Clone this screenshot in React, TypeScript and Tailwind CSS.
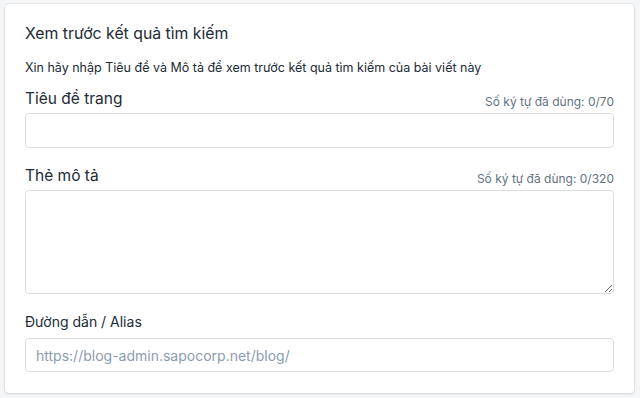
import React from "react";

export default function App() {
  return (
    <div
      className="min-h-[398px] w-[640px] bg-[#f4f6f8] pt-[4px] pl-[5px] text-[#212b36]"
      style={{ fontFamily: 'Inter, "Noto Sans", sans-serif' }}
    >
      <div className="w-[629px] rounded-[4px] bg-white px-[20px] pt-[20px] pb-[21px] shadow-[0_0_0_1px_rgba(63,63,68,0.05),0_1px_3px_0_rgba(63,63,68,0.15)]">
        <h2 className="text-[15.8px] leading-[20px] font-normal">Xem trước kết quả tìm kiếm</h2>
        <p className="mt-[16px] text-[12.5px] leading-[16px]">
          Xin hãy nhập Tiêu đề và Mô tả để xem trước kết quả tìm kiếm của bài viết này
        </p>
        <div className="mt-[11px] flex items-end justify-between">
          <span className="text-[15.5px] leading-[24px]">Tiêu đề trang</span>
          <span className="pb-[1px] text-[12px] leading-[16px] text-[#637381]">Số ký tự đã dùng: 0/70</span>
        </div>
        <input
          className="mt-[2px] block h-[35px] w-full rounded-[4px] border border-[#d9dde2] bg-white px-[10px] outline-none"
          type="text"
        />
        <div className="mt-[16px] flex items-end justify-between">
          <span className="text-[15.5px] leading-[24px]">Thẻ mô tả</span>
          <span className="pb-[1px] text-[12px] leading-[16px] text-[#637381]">Số ký tự đã dùng: 0/320</span>
        </div>
        <textarea className="mt-[2px] block h-[104px] w-full resize-y rounded-[4px] border border-[#d9dde2] bg-white px-[10px] outline-none" />
        <div className="mt-[18px] text-[14px] leading-[20px]">Đường dẫn / Alias</div>
        <input
          className="mt-[6px] block h-[34px] w-full rounded-[4px] border border-[#d9dde2] bg-white px-[10px] text-[14px] outline-none placeholder:text-[#8a9bb0]"
          type="text"
          placeholder="https://blog-admin.sapocorp.net/blog/"
        />
      </div>
    </div>
  );
}
